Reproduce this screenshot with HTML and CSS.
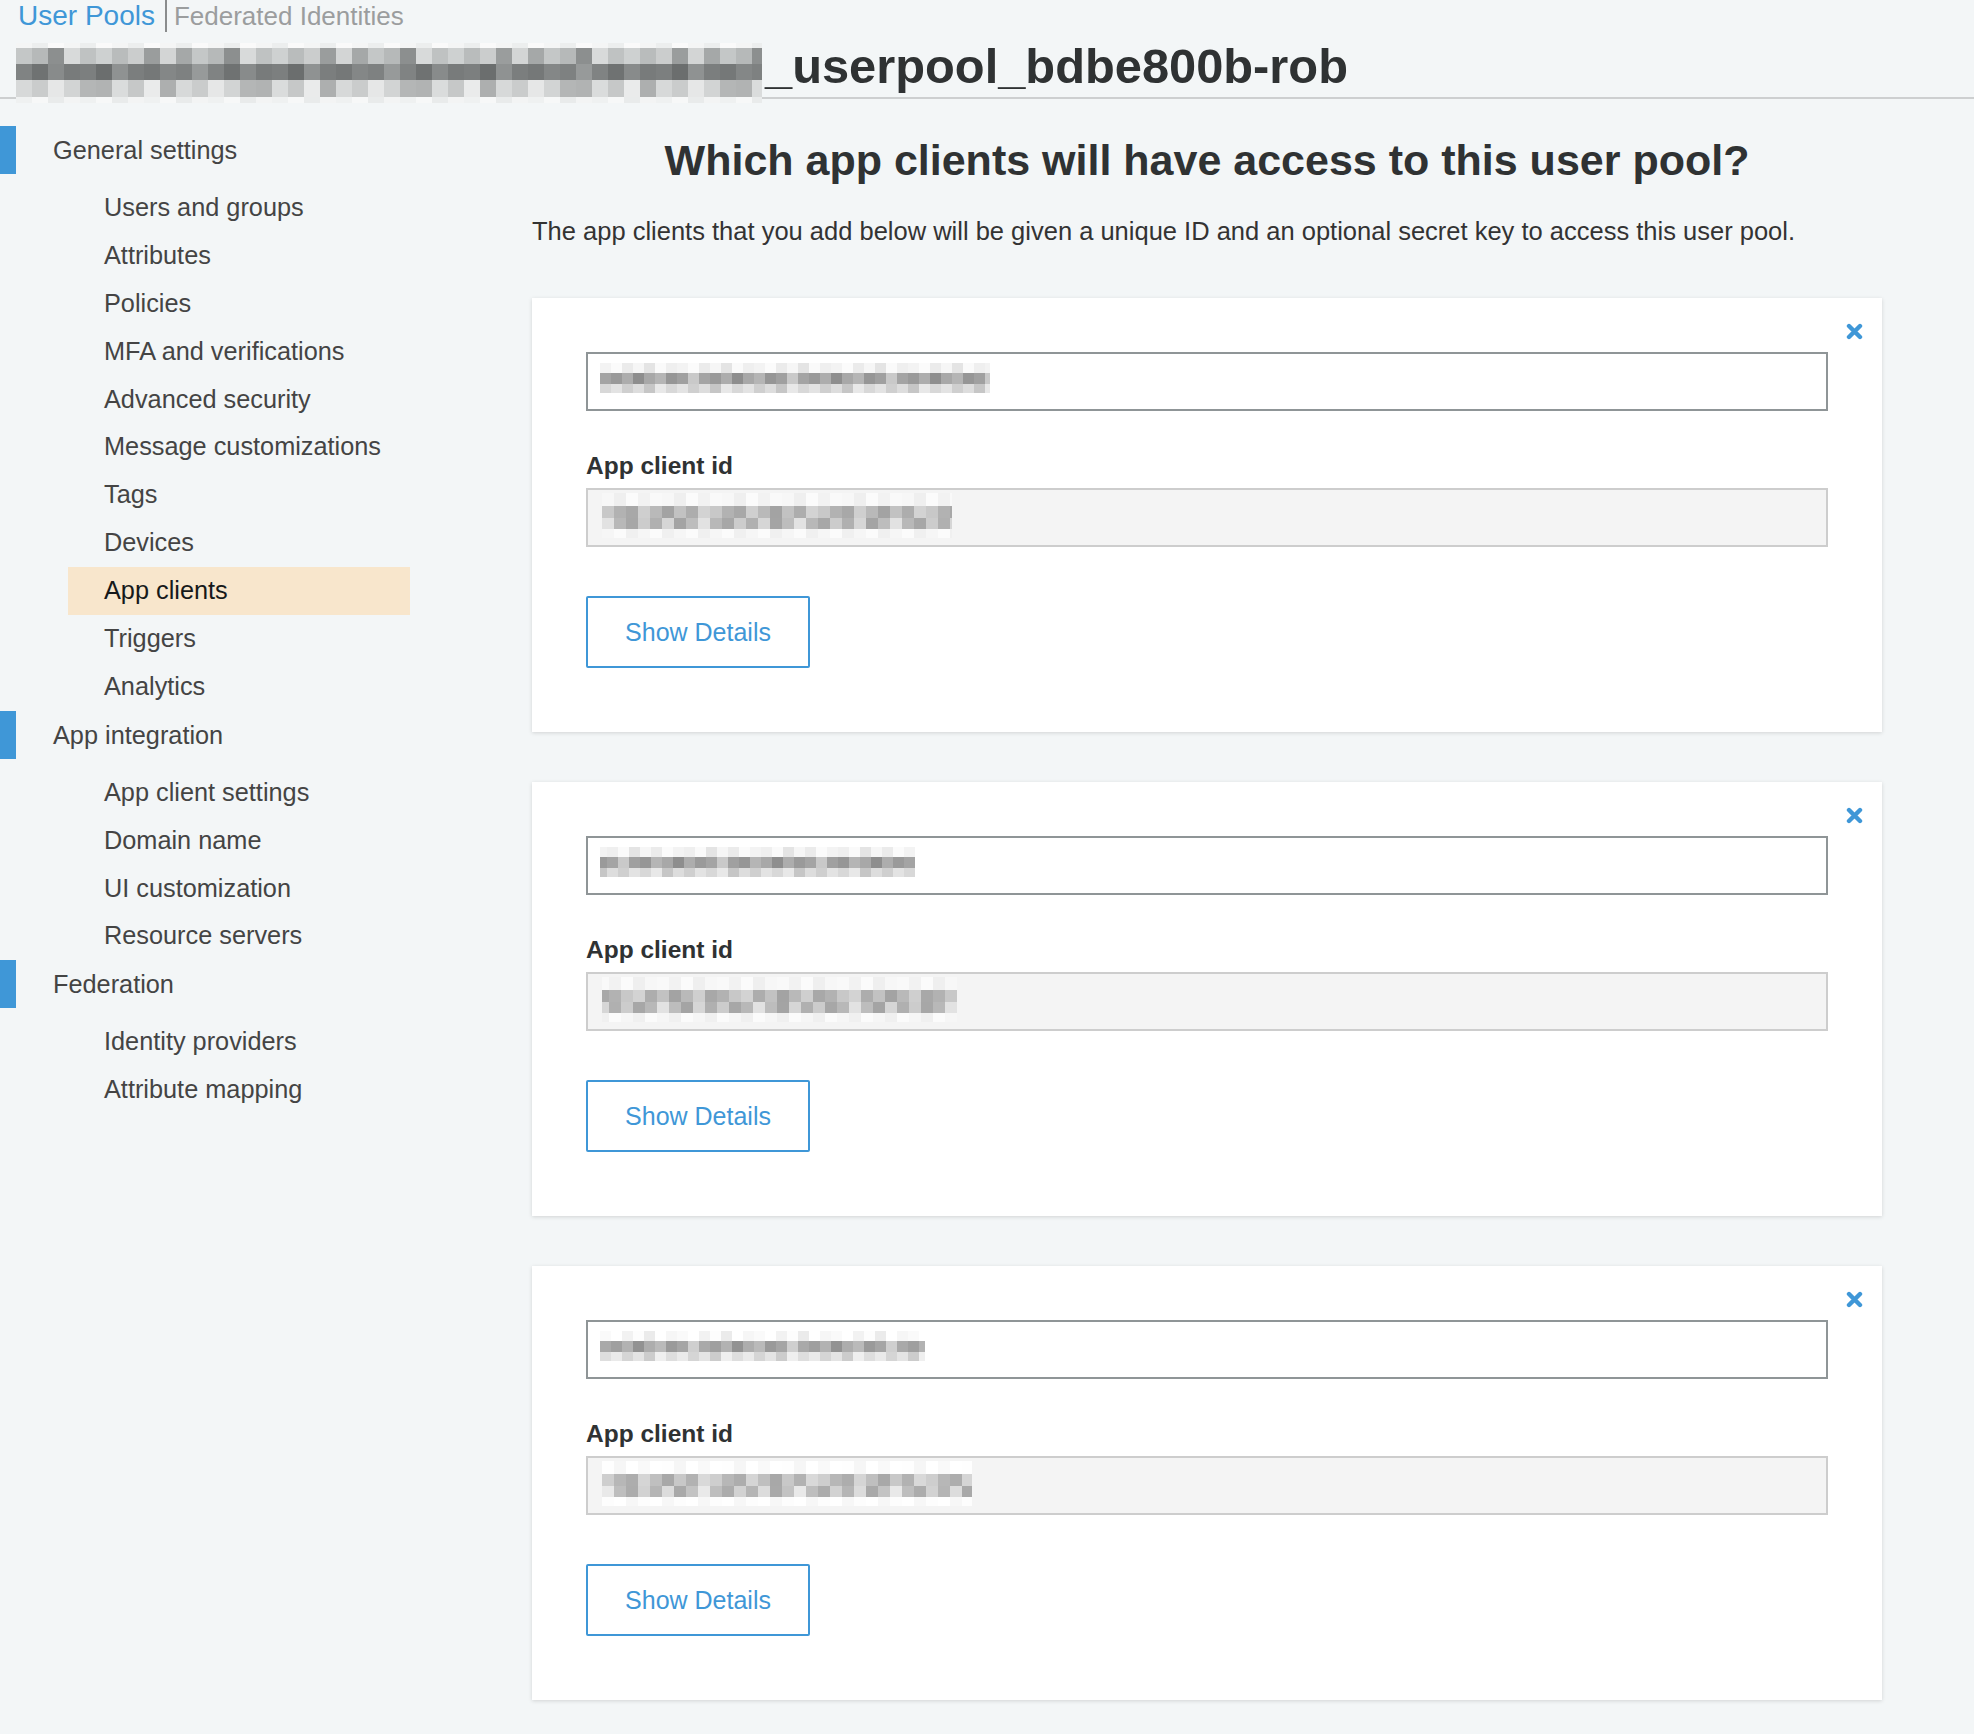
FILE: index.html
```html
<!DOCTYPE html>
<html lang="en">
<head>
<meta charset="utf-8">
<title>User Pools - App clients</title>
<link rel="stylesheet" href="styles.css">
</head>
<body>
<div class="page">
  <nav class="topnav">
    <span class="tab tab-active">User Pools</span><span class="tab tab-muted">Federated Identities</span>
  </nav>
  <header class="pool-header">
    <div class="mosaic mosaic-head"></div>
    <h1 class="pool-name">_userpool_bdbe800b-rob</h1>
  </header>
  <div class="layout">
    <aside class="sidebar">
      <div class="group-head">General settings</div>
      <ul class="sub-list">
        <li class="sub-item">Users and groups</li>
        <li class="sub-item">Attributes</li>
        <li class="sub-item">Policies</li>
        <li class="sub-item">MFA and verifications</li>
        <li class="sub-item">Advanced security</li>
        <li class="sub-item">Message customizations</li>
        <li class="sub-item">Tags</li>
        <li class="sub-item">Devices</li>
        <li class="sub-item sub-active">App clients</li>
        <li class="sub-item">Triggers</li>
        <li class="sub-item">Analytics</li>
      </ul>
      <div class="group-head">App integration</div>
      <ul class="sub-list">
        <li class="sub-item">App client settings</li>
        <li class="sub-item">Domain name</li>
        <li class="sub-item">UI customization</li>
        <li class="sub-item">Resource servers</li>
      </ul>
      <div class="group-head">Federation</div>
      <ul class="sub-list">
        <li class="sub-item">Identity providers</li>
        <li class="sub-item">Attribute mapping</li>
      </ul>
    </aside>
    <main class="main">
      <h2 class="main-title">Which app clients will have access to this user pool?</h2>
      <p class="intro">The app clients that you add below will be given a unique ID and an optional secret key to access this user pool.</p>
      <div class="cards">
        <section class="card">
          <div class="close-row"><svg class="close-icon" viewBox="0 0 17 17" width="17" height="17"><path d="M3 3 L14 14 M14 3 L3 14" stroke="#3f97d7" stroke-width="4.4" stroke-linecap="round" fill="none"/></svg></div>
          <div class="field field-name"><div class="mosaic mosaic-input mw-390"></div></div>
          <div class="label">App client id</div>
          <div class="field field-id"><div class="mosaic mosaic-id mw-350"></div></div>
          <button class="btn">Show Details</button>
        </section>
        <section class="card">
          <div class="close-row"><svg class="close-icon" viewBox="0 0 17 17" width="17" height="17"><path d="M3 3 L14 14 M14 3 L3 14" stroke="#3f97d7" stroke-width="4.4" stroke-linecap="round" fill="none"/></svg></div>
          <div class="field field-name"><div class="mosaic mosaic-input mw-315 flip"></div></div>
          <div class="label">App client id</div>
          <div class="field field-id"><div class="mosaic mosaic-id mw-355 flip"></div></div>
          <button class="btn">Show Details</button>
        </section>
        <section class="card">
          <div class="close-row"><svg class="close-icon" viewBox="0 0 17 17" width="17" height="17"><path d="M3 3 L14 14 M14 3 L3 14" stroke="#3f97d7" stroke-width="4.4" stroke-linecap="round" fill="none"/></svg></div>
          <div class="field field-name"><div class="mosaic mosaic-input mw-325 shift"></div></div>
          <div class="label">App client id</div>
          <div class="field field-id"><div class="mosaic mosaic-id mw-370 shift"></div></div>
          <button class="btn">Show Details</button>
        </section>
      </div>
    </main>
  </div>
</div>
</body>
</html>
```

FILE: styles.css
```css
* { box-sizing: border-box; }

html, body {
  margin: 0;
  padding: 0;
  background: #f3f6f7;
}

body {
  font-family: "Liberation Sans", Arial, sans-serif;
  color: #333;
}

.page {
  width: 1974px;
  min-height: 1734px;
  padding-bottom: 30px;
}

/* top nav */
.topnav {
  height: 32px;
  padding-left: 18px;
  display: flex;
  align-items: flex-start;
  white-space: nowrap;
}

.tab {
  display: inline-block;
  height: 32px;
  line-height: 32px;
}

.tab-active {
  font-size: 28px;
  color: #3f97d7;
}

.tab-muted {
  font-size: 26px;
  color: #9b9d9e;
  margin-left: 10px;
  padding-left: 7px;
  border-left: 2px solid #8a8c8d;
}

/* pool header */
.pool-header {
  height: 67px;
  border-bottom: 2px solid #cdcfd0;
  display: flex;
  align-items: flex-start;
}

.pool-name {
  margin: 10px 0 0 3px;
  font-size: 48.8px;
  line-height: 48px;
  font-weight: bold;
  color: #2f3233;
  white-space: nowrap;
}

.mosaic {
  flex: none;
}

.mosaic-head {
  width: 746px;
  height: 60px;
  margin-left: 16px;
  margin-top: 11px;
  background:
    repeating-linear-gradient(90deg,
      #c4c7c7 0 16px, #b6b9b9 16px 32px, #8c8f8f 32px 48px, #d8dada 48px 64px,
      #bfc2c2 64px 80px, #ced1d1 80px 96px, #b9bcbc 96px 112px, #cbcdcd 112px 128px,
      #9a9d9d 128px 144px, #d3d5d5 144px 160px, #a5a8a8 160px 176px) 0 5px / 100% 16px no-repeat,
    repeating-linear-gradient(90deg,
      #808383 0 16px, #6f7272 16px 32px, #888b8b 32px 48px, #787b7b 48px 64px,
      #7c7f7f 64px 80px, #6b6e6e 80px 96px, #8f9292 96px 112px, #7b7e7e 112px 128px,
      #757878 128px 144px, #848787 144px 160px, #7e8181 160px 176px, #979a9a 176px 192px) 0 21px / 100% 16px no-repeat,
    repeating-linear-gradient(90deg,
      #d7d9d9 0 16px, #cacccc 16px 32px, #e6e7e7 32px 48px, #d2d4d4 48px 64px,
      #b4b6b6 64px 80px, #b1b3b3 80px 96px, #dadcdc 96px 112px, #c6c8c8 112px 128px,
      #eaebeb 128px 144px, #adafaf 144px 160px) 0 37px / 100% 17px no-repeat,
    repeating-linear-gradient(90deg,
      #eff1f1 0 16px, #f7f8f8 16px 32px, #e9ebeb 32px 48px, #f3f4f4 48px 64px) 0 54px / 100% 6px no-repeat,
    repeating-linear-gradient(90deg,
      #f4f5f5 0 16px, #eceeee 16px 32px, #fafafa 32px 48px) 0 0 / 100% 5px no-repeat;
}

/* layout */
.layout {
  display: grid;
  grid-template-columns: 420px 1350px;
  column-gap: 112px;
}

/* sidebar */
.sidebar {
  padding-top: 27px;
}

.group-head {
  height: 48px;
  line-height: 48px;
  border-left: 16px solid #3f97d7;
  padding-left: 37px;
  font-size: 25.3px;
  color: #444;
  white-space: nowrap;
}

.sub-list {
  list-style: none;
  margin: 10px 0 0 0;
  padding: 0;
}

.sub-item {
  height: 47.9px;
  line-height: 47.9px;
  margin-left: 68px;
  width: 342px;
  padding-left: 36px;
  font-size: 25.3px;
  color: #444;
  white-space: nowrap;
}

.sub-active {
  background: #f8e6cc;
  color: #16191a;
}

/* main */
.main-title {
  margin: 35px 0 0 0;
  font-size: 43px;
  line-height: 52px;
  font-weight: bold;
  color: #2f3233;
  text-align: center;
  white-space: nowrap;
}

.intro {
  margin: 29px 0 0 0;
  font-size: 25.5px;
  line-height: 32px;
  color: #333;
  white-space: nowrap;
}

.cards {
  margin-top: 51px;
  display: flex;
  flex-direction: column;
  gap: 50px;
}

.card {
  background: #fff;
  padding: 25px 54px 64px 54px;
  box-shadow: 0 1px 4px rgba(0,0,0,.14);
  display: flex;
  flex-direction: column;
  align-items: flex-start;
}

.close-row {
  align-self: stretch;
  height: 17px;
  margin-right: -35px;
  margin-bottom: 12px;
  display: flex;
  justify-content: flex-end;
}

.close-icon {
  display: block;
}

.field {
  align-self: stretch;
  height: 59px;
  border: 2px solid #8f9597;
  background: #fff;
  padding-left: 12px;
}

.field-name {
  padding-top: 9px;
}

.field-id {
  border-color: #cdcdcd;
  background: #f4f4f4;
  padding-top: 3px;
  padding-left: 14px;
}

.label {
  margin-top: 39.5px;
  margin-bottom: 7.5px;
  font-size: 24.5px;
  line-height: 30px;
  font-weight: bold;
  color: #2f3233;
}

.mosaic-input {
  height: 30px;
  background:
    repeating-linear-gradient(90deg,
      #f3f3f3 0 11px, #fbfbfb 11px 22px, #ebebeb 22px 33px, #f6f6f6 33px 44px,
      #e4e4e4 44px 55px, #fafafa 55px 66px, #efefef 66px 77px) 0 0 / 100% 10px no-repeat,
    repeating-linear-gradient(90deg,
      #a4a4a4 0 11px, #9a9a9a 11px 22px, #adadad 22px 33px, #8e8e8e 33px 44px,
      #a8a8a8 44px 55px, #b5b5b5 55px 66px, #969696 66px 77px, #a0a0a0 77px 88px,
      #c9c9c9 88px 99px) 0 10px / 100% 11px no-repeat,
    repeating-linear-gradient(90deg,
      #d8d8d8 0 11px, #e3e3e3 11px 22px, #cfcfcf 22px 33px, #dddddd 33px 44px,
      #c6c6c6 44px 55px, #e8e8e8 55px 66px) 0 21px / 100% 9px no-repeat;
}

.mosaic-id {
  height: 45px;
  background:
    repeating-linear-gradient(90deg,
      #f7f7f7 0 12px, #efefef 12px 24px, #fbfbfb 24px 36px, #f2f2f2 36px 48px, #f9f9f9 48px 60px) 0 0 / 100% 13px no-repeat,
    repeating-linear-gradient(90deg,
      #c8c8c8 0 12px, #b2b2b2 12px 24px, #a8a8a8 24px 36px, #cfcfcf 36px 48px,
      #b9b9b9 48px 60px, #a3a3a3 60px 72px, #c2c2c2 72px 84px, #adadad 84px 96px,
      #d3d3d3 96px 108px) 0 13px / 100% 12px no-repeat,
    repeating-linear-gradient(90deg,
      #e2e2e2 0 12px, #b8b8b8 12px 24px, #a7a7a7 24px 36px, #cccccc 36px 48px,
      #b0b0b0 48px 60px, #d6d6d6 60px 72px, #a4a4a4 72px 84px, #bdbdbd 84px 96px) 0 25px / 100% 11px no-repeat,
    repeating-linear-gradient(90deg,
      #f6f6f6 0 12px, #fbfbfb 12px 24px, #f0f0f0 24px 36px) 0 36px / 100% 9px no-repeat;
}

.flip { transform: scaleX(-1); }
.shift { filter: brightness(1.03); }

.mw-390 { width: 390px; }
.mw-350 { width: 350px; }
.mw-315 { width: 315px; }
.mw-355 { width: 355px; }
.mw-325 { width: 325px; }
.mw-370 { width: 370px; }

.btn {
  margin-top: 49px;
  width: 224px;
  height: 72px;
  border: 2px solid #3f97d7;
  border-radius: 2px;
  background: #fff;
  color: #3f97d7;
  font-family: "Liberation Sans", Arial, sans-serif;
  font-size: 25px;
  padding: 0;
  cursor: pointer;
}
```
